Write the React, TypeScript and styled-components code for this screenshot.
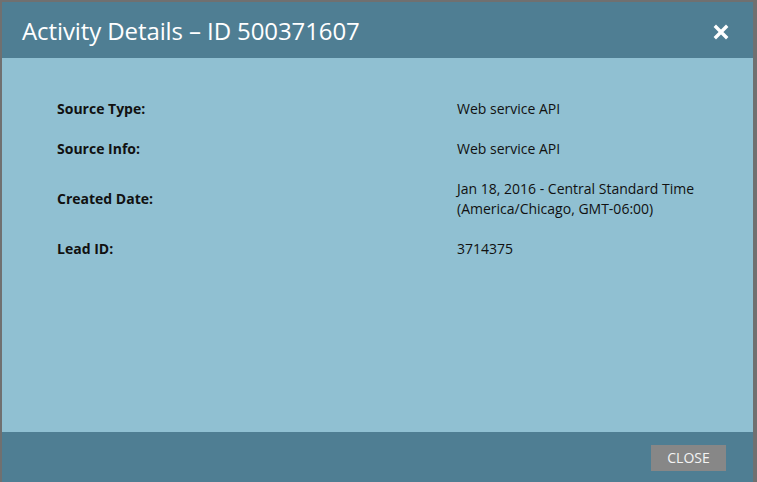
import React from "react";
import styled, { createGlobalStyle } from "styled-components";

const Global = createGlobalStyle`
  html, body { margin: 0; padding: 0; background: #707070; }
  body { font-family: "Open Sans", "Liberation Sans", sans-serif; }
  #root { height: 482px; overflow: hidden; }
`;

const Frame = styled.div`
  height: 482px;
  padding: 2px 4px 0 2px;
  box-sizing: border-box;
`;

const Dialog = styled.div`
  height: 100%;
  display: flex;
  flex-direction: column;
  background: #90c0d2;
`;

const Header = styled.div`
  height: 56px;
  flex: none;
  background: #4f7e93;
  display: flex;
  align-items: center;
  justify-content: space-between;
  padding: 0 24px 0 20px;
`;

const Title = styled.h1`
  margin: 0;
  font-size: 24px;
  font-weight: 400;
  color: #ffffff;
  letter-spacing: -0.1px;
`;

const CloseX = styled.button`
  border: 0;
  background: none;
  padding: 0;
  margin-top: 3px;
  width: 16px;
  height: 16px;
  cursor: pointer;
  display: flex;
`;

const Body = styled.div`
  flex: 1;
  padding: 41px 20px 0 55px;
`;

const Grid = styled.div`
  display: grid;
  grid-template-columns: 400px 1fr;
  row-gap: 20px;
  align-items: center;
`;

const Label = styled.div`
  font-size: 14px;
  font-weight: 700;
  line-height: 20px;
  color: #111;
`;

const Value = styled.div`
  font-size: 14px;
  font-weight: 400;
  line-height: 20px;
  color: #111;
`;

const Footer = styled.div`
  height: 50px;
  flex: none;
  background: #4f7e93;
  display: flex;
  align-items: center;
  justify-content: flex-end;
  padding: 0 27px 0 0;
`;

const CloseButton = styled.button`
  width: 75px;
  height: 26px;
  border: 0;
  background: #878787;
  color: #f4f4f4;
  font-family: "Open Sans", "Liberation Sans", sans-serif;
  font-size: 14px;
  padding: 0;
  margin-top: 1px;
  cursor: pointer;
`;

const rows: [string, React.ReactNode][] = [
  ["Source Type:", "Web service API"],
  ["Source Info:", "Web service API"],
  [
    "Created Date:",
    <>
      Jan 18, 2016 - Central Standard Time
      <br />
      (America/Chicago, GMT-06:00)
    </>,
  ],
  ["Lead ID:", "3714375"],
];

export default function App() {
  return (
    <>
      <Global />
      <Frame>
        <Dialog>
          <Header>
            <Title>Activity Details – ID 500371607</Title>
            <CloseX aria-label="Close">
              <svg width="16" height="16" viewBox="0 0 16 16">
                <path d="M3 3 L13 13 M13 3 L3 13" stroke="#fff" strokeWidth="3.4" strokeLinecap="square" />
              </svg>
            </CloseX>
          </Header>
          <Body>
            <Grid>
              {rows.map(([l, v]) => (
                <React.Fragment key={l}>
                  <Label>{l}</Label>
                  <Value>{v}</Value>
                </React.Fragment>
              ))}
            </Grid>
          </Body>
          <Footer>
            <CloseButton>CLOSE</CloseButton>
          </Footer>
        </Dialog>
      </Frame>
    </>
  );
}
